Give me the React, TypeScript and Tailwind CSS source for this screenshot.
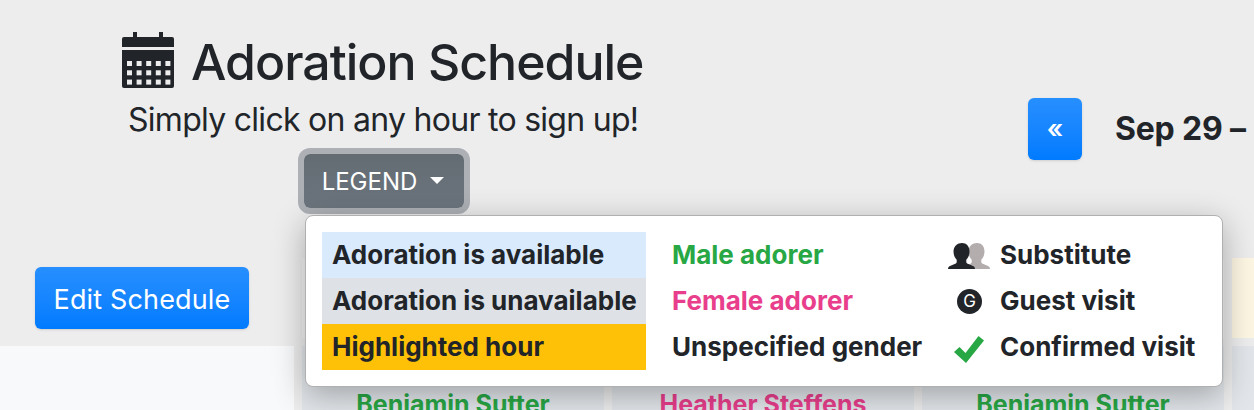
const font = "font-['Inter',sans-serif]";

function CalendarIcon() {
  const cells = [];
  for (let row = 0; row < 3; row++) {
    for (let col = 0; col < 5; col++) {
      cells.push(<rect key={`${row}-${col}`} x={5 + col * 9.6} y={29 + row * 9.3} width="5" height="5" fill="#ededed" />);
    }
  }
  return (
    <svg width="52" height="56" viewBox="0 0 52 56" className="shrink-0">
      <rect x="11" y="0" width="4" height="7" fill="#212529" />
      <rect x="37" y="0" width="4" height="7" fill="#212529" />
      <path d="M2 5h48a2 2 0 0 1 2 2v8H0V7a2 2 0 0 1 2-2z" fill="#212529" />
      <path d="M0 18h52v36a2 2 0 0 1-2 2H2a2 2 0 0 1-2-2z" fill="#212529" />
      {cells}
    </svg>
  );
}

function PeopleIcon() {
  const person = "M14 0c4.5 0 7.5 3.4 7.5 8.5 0 3.5-1.3 6.4-3.2 8.2v2.1c0 1 .5 1.6 1.5 2l5.2 2.2c1.4.6 2 1.500 2 3H0c0-1.500.6-2.400 2-3l5.2-2.200c1-.4 1.500-1 1.500-2v-2.100C6.800 14.900 5.500 12 5.500 8.500 5.500 3.400 9.500 0 14 0z";
  return (
    <svg width="42" height="27" viewBox="0 0 42 27" className="mt-[3px]">
      <path d={person} transform="translate(15 0)" fill="#b3adad" />
      <path d={person} fill="#212529" />
    </svg>
  );
}

function GuestIcon() {
  return (
    <div className="flex h-[25px] w-[25px] items-center justify-center rounded-full bg-[#212529] text-[17px] font-normal leading-none text-white">G</div>
  );
}

function CheckIcon() {
  return (
    <svg width="30" height="27" viewBox="0 0 30 27" className="mt-[5px]">
      <path d="M0 16 L5.500 11 L11.500 17 L24.500 0 L30 4.500 L12 27 Z" fill="#28a745" />
    </svg>
  );
}

function LegendMenu() {
  return (
    <div className="absolute left-[305px] top-[215px] z-10 flex h-[172px] w-[918px] rounded-lg border border-[#b0b0b0] bg-white px-4 py-4 text-[26px] font-bold leading-[46px] text-[#212529] shadow-[0_8px_32px_rgba(0,0,0,0.3)]">
      <div className="w-[324px]">
        <div className="h-[46px] bg-[#d9eafd] pl-[10px]">Adoration is available</div>
        <div className="h-[46px] bg-[#dee2e6] pl-[10px]">Adoration is unavailable</div>
        <div className="h-[46px] bg-[#ffc107] pl-[10px]">Highlighted hour</div>
      </div>
      <div className="ml-[26px] w-[276px]">
        <div className="h-[46px] text-[#28a745]">Male adorer</div>
        <div className="h-[46px] text-[#e83e8c]">Female adorer</div>
        <div className="h-[46px]">Unspecified gender</div>
      </div>
      <div>
        <div className="flex h-[46px] items-center">
          <div className="flex w-[52px] justify-start"><PeopleIcon /></div>Substitute
        </div>
        <div className="flex h-[46px] items-center">
          <div className="flex w-[52px] pl-[9px]"><GuestIcon /></div>Guest visit
        </div>
        <div className="flex h-[46px] items-center">
          <div className="flex w-[52px] pl-[6px]"><CheckIcon /></div>Confirmed visit
        </div>
      </div>
    </div>
  );
}

export default function App() {
  return (
    <div className={`${font} relative h-[410px] w-[1254px] overflow-hidden bg-[#ededed] text-[#212529]`}>
      <div className="flex h-[258px]">
        <div className="w-[1028px] shrink-0 pl-[122px] pt-[32px]">
          <div className="flex h-[56px] items-center gap-[17px]">
            <CalendarIcon />
            <h1 className="mt-[4px] whitespace-nowrap text-[50px] font-medium leading-none tracking-[-1px]">Adoration Schedule</h1>
          </div>
          <p className="ml-[6px] mt-[10px] whitespace-nowrap text-[32px] leading-[44px] tracking-[-0.72px]">Simply click on any hour to sign up!</p>
          <button className="ml-[182px] mt-[12px] flex h-[54px] w-[160px] items-center justify-center gap-[13px] rounded-md bg-gradient-to-b from-[#636b73] to-[#6c757d] pr-[2px] pt-[2px] text-2xl uppercase text-white shadow-[0_0_0_6px_#adb1b6]">
            Legend
            <span className="mb-[4px] h-0 w-0 border-x-[7px] border-t-[7px] border-x-transparent border-t-white" />
          </button>
        </div>
        <div className="flex items-start whitespace-nowrap pt-[98px]">
          <button className="flex h-[62px] w-[54px] items-center justify-center rounded-md bg-gradient-to-b from-[#268fff] to-[#007bff] pb-[2px] text-[26px] font-semibold text-white shadow-sm">
            «
          </button>
          <span className="ml-[33px] mt-[11px] text-[32px] font-bold leading-[40px] tracking-[-0.2px]">Sep 29 –</span>
        </div>
      </div>
      <div className="flex h-[88px]">
        <div className="w-[302px] pl-[35px] pt-[9px]">
          <button className="h-[62px] w-[214px] rounded-md bg-gradient-to-b from-[#268fff] to-[#007bff] pt-[4px] text-[27px] tracking-[0.15px] text-white shadow-sm">Edit Schedule</button>
        </div>
        <div className="flex flex-1 gap-[8px]">
          <div className="h-[80px] w-[302px] bg-[#f2f2f2]" />
          <div className="h-[80px] w-[302px] bg-[#f2f2f2]" />
          <div className="h-[80px] w-[302px] bg-[#f2f2f2]" />
          <div className="h-[80px] w-[22px] bg-[#fdf6e3]" />
        </div>
      </div>
      <div className="flex h-[64px]">
        <div className="w-[294px] bg-[#f8f9fa]" />
        <div className="flex flex-1 gap-[8px] pl-[8px] text-[25px] font-bold leading-[30px]">
          <div className="h-full w-[302px] bg-[#e2e6ea] pt-[43px] text-center text-[#28a745]">Benjamin Sutter</div>
          <div className="h-full w-[302px] bg-[#e2e6ea] pt-[43px] text-center text-[#e83e8c]">Heather Steffens</div>
          <div className="h-full w-[302px] bg-[#e2e6ea] pt-[43px] text-center text-[#28a745]">Benjamin Sutter</div>
          <div className="h-full w-[22px] bg-[#e2e6ea]" />
        </div>
      </div>
      <LegendMenu />
    </div>
  );
}
